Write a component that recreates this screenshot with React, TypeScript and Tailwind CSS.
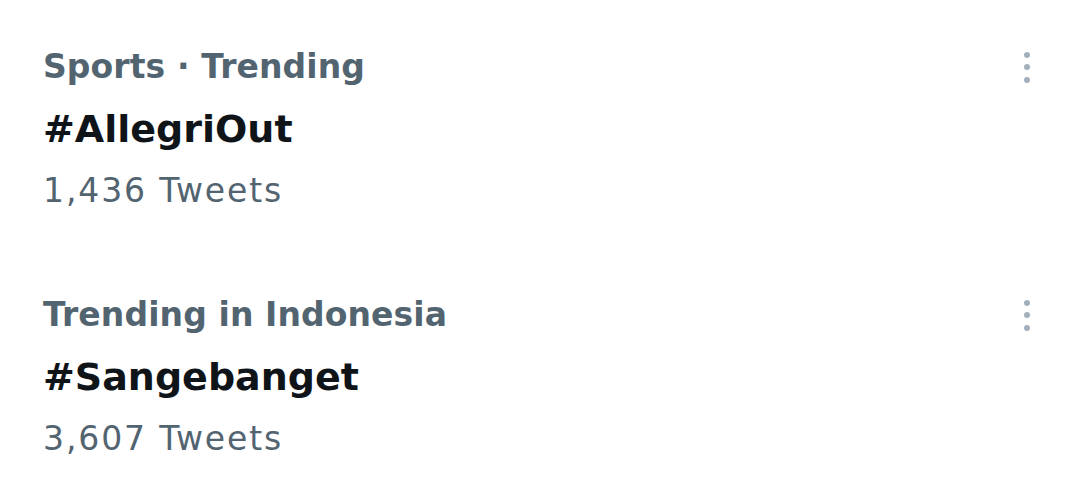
const trends = [
  { label: "Sports · Trending", tag: "#AllegriOut", count: "1,436 Tweets" },
  { label: "Trending in Indonesia", tag: "#Sangebanget", count: "3,607 Tweets" },
];

function MoreDots() {
  return (
    <div className="flex h-[62px] flex-col items-center justify-center gap-[6.5px]">
      <span className="h-[6px] w-[6px] rounded-full bg-[#a3afbb]" />
      <span className="h-[6px] w-[6px] rounded-full bg-[#a3afbb]" />
      <span className="h-[6px] w-[6px] rounded-full bg-[#a3afbb]" />
    </div>
  );
}

export default function App() {
  return (
    <div className="h-[503px] w-[1080px] overflow-hidden bg-white font-['DejaVu_Sans',sans-serif]">
      {trends.map((t) => (
        <div key={t.tag} className="flex h-[248px] items-start justify-between pl-[43px] pr-[50px] pt-[36px]">
          <div className="flex flex-col">
            <div className="text-[33px] font-bold leading-[62px] tracking-[0.1px] text-[#536471]">{t.label}</div>
            <div className="text-[38px] font-bold leading-[62px] text-[#0f1419]">{t.tag}</div>
            <div className="text-[33px] leading-[62px] tracking-[1.9px] text-[#536471]">{t.count}</div>
          </div>
          <MoreDots />
        </div>
      ))}
    </div>
  );
}
